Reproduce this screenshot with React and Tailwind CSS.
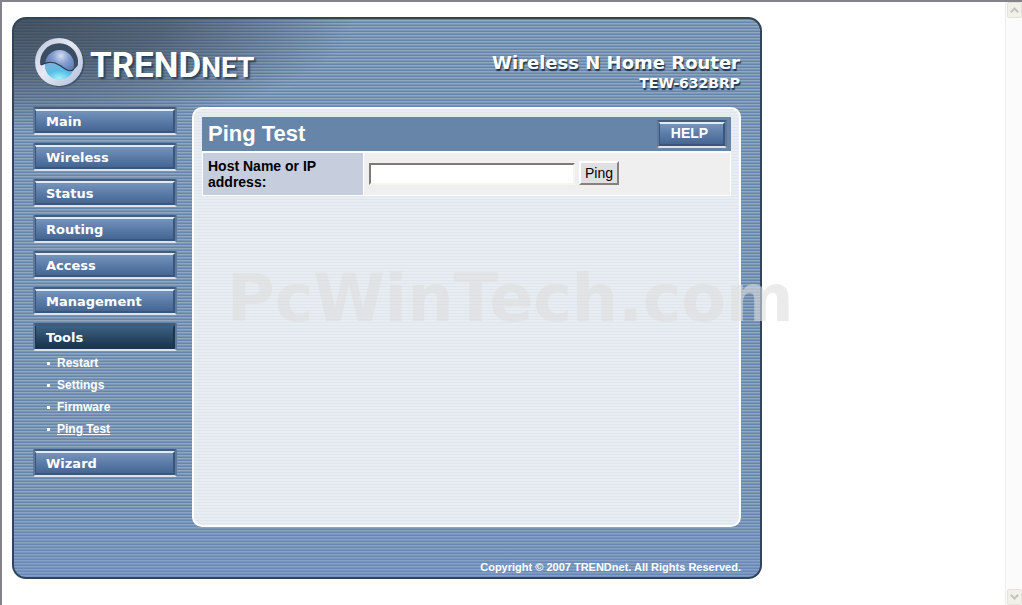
import React, { useState } from 'react'
import clsx from 'clsx'

const MENU = [
  { name: 'Main' },
  { name: 'Wireless' },
  { name: 'Status' },
  { name: 'Routing' },
  { name: 'Access' },
  { name: 'Management' },
  { name: 'Tools', children: ['Restart', 'Settings', 'Firmware', 'Ping Test'] },
  { name: 'Wizard' },
]

const bevel = 'block border-2 border-t-[#465b78] border-x-[#60789a] border-b-[#dde3ee] rounded-[2px]'

function Globe() {
  return (
    <svg viewBox="0 0 50 50" className="w-[50px] h-[50px] shrink-0" aria-hidden="true">
      <defs>
        <linearGradient id="ring" x1="0" y1="0" x2="1" y2="1">
          <stop offset="0" stopColor="#b9c4dc" />
          <stop offset="0.45" stopColor="#e6eaf4" />
          <stop offset="1" stopColor="#aebcd9" />
        </linearGradient>
        <radialGradient id="ball" cx="0.55" cy="0.2" r="0.8">
          <stop offset="0" stopColor="#d3def2" />
          <stop offset="0.35" stopColor="#859fd0" />
          <stop offset="1" stopColor="#48619b" />
        </radialGradient>
        <radialGradient id="sea" cx="0.5" cy="0.9" r="0.8">
          <stop offset="0" stopColor="#a4f0fb" />
          <stop offset="0.55" stopColor="#55bfe6" />
          <stop offset="1" stopColor="#78b3df" />
        </radialGradient>
      </defs>
      <circle cx="25.5" cy="25.5" r="24" fill="#25374c" opacity="0.45" />
      <circle cx="24" cy="24" r="24" fill="url(#ring)" />
      <path d="M5.3 27 A19 19 0 1 1 42.8 27.5 C41 29.5 39.5 31.5 38 32 L24 20 L10 26 Z" fill="#3a4d63" />
      <circle cx="24.5" cy="26.5" r="14.5" fill="url(#ball)" />
      <path d="M10 26.5 C15 23.5 20 24.5 25 28 C30 31.5 34 34 38.2 32 A14.5 14.5 0 0 1 10 26.5 Z" fill="url(#sea)" />
      <path d="M6 27 C13 23 19 23.5 25 27.5 C31 31.5 34 34.5 39 31.5" fill="none" stroke="#26384f" strokeWidth="1.1" />
    </svg>
  )
}

function MenuButton({ name, active }) {
  return (
    <a href="#" className={bevel}>
      <span
        className={clsx(
          'block h-6 border-2 border-l pl-2.5 bg-linear-to-b text-[13px] leading-[22px] font-bold text-white',
          active
            ? 'border-[#1c3650] border-t-[#3b5f80] from-[#3b6080] to-[#1b3450]'
            : 'border-[#39567f] border-t-[#dfeafa] from-[#7494bd] to-[#456593]'
        )}
      >
        {name}
      </span>
    </a>
  )
}

function Sidebar() {
  return (
    <nav className="w-36 shrink-0">
      <ul className="flex flex-col gap-2">
        {MENU.map((m) => (
          <li key={m.name}>
            <MenuButton name={m.name} active={!!m.children} />
            {m.children && (
              <ul className="py-px pl-3.5 font-['Liberation_Sans',Arial,sans-serif]">
                {m.children.map((c) => (
                  <li key={c} className="flex items-center gap-[7px] h-[22px] text-xs font-bold text-white">
                    <span className="w-[3px] h-[3px] bg-white" />
                    <a href="#" className={clsx(c === 'Ping Test' && 'underline')}>{c}</a>
                  </li>
                ))}
              </ul>
            )}
          </li>
        ))}
      </ul>
    </nav>
  )
}

function PingTest() {
  const [host, setHost] = useState('')

  return (
    <main className="flex-1 min-w-0 min-h-[420px] p-2 border-2 border-white rounded-[10px] bg-[repeating-linear-gradient(#dfe6ed_0px_1px,#e8edf1_1px_3px)] font-['Liberation_Sans',Arial,sans-serif]">
      <div className="flex items-center justify-between h-[34px] pl-1.5 pr-1 bg-[#6785a9]">
        <h1 className="text-[22px] leading-8 font-bold text-white">Ping Test</h1>
        <button type="button" className={clsx(bevel, 'w-[70px]')}>
          <span className="block h-6 border-2 border-l border-[#39567f] border-t-[#dfeafa] bg-linear-to-b from-[#7494bd] to-[#456593] pr-1 text-sm leading-[18px] font-bold text-white text-center">
            HELP
          </span>
        </button>
      </div>
      <form onSubmit={(e) => e.preventDefault()} className="flex gap-px bg-white pt-0.5 px-px pb-px">
        <label htmlFor="host" className="w-40 shrink-0 px-[5px] py-[5px] bg-[#c6cddc] text-sm leading-4 font-bold text-black">
          Host Name or IP address:
        </label>
        <div className="flex flex-1 items-center gap-1 px-[5px] bg-[#efefef]">
          <input
            id="host"
            type="text"
            value={host}
            onChange={(e) => setHost(e.target.value)}
            className="w-[206px] h-[22px] px-1 bg-white border-2 border-t-[#7d7b75] border-l-[#7d7b75] border-r-[#f6f5ef] border-b-[#f6f5ef] text-[13px] outline-none"
          />
          <button
            type="submit"
            className="h-6 mb-0.5 px-1 bg-[#e0dfe3] border-2 border-t-white border-l-white border-r-[#85837c] border-b-[#85837c] text-sm leading-4 text-black"
          >
            Ping
          </button>
        </div>
      </form>
    </main>
  )
}

function Scrollbar() {
  const btn = 'flex items-center justify-center w-[15px] h-4 rounded-[2px] border border-[#e3e3da] bg-[#f1f1ea]'
  return (
    <div className="flex flex-col items-center justify-between w-[17px] shrink-0 border-l border-[#ececec] bg-[#fbfbfc]">
      <button type="button" aria-label="Scroll up" className={btn}>
        <svg viewBox="0 0 9 6" className="w-[9px] h-1.5"><path d="M0.8 5.2 L4.5 1.5 L8.2 5.2" fill="none" stroke="#c4c4bd" strokeWidth="2" /></svg>
      </button>
      <button type="button" aria-label="Scroll down" className={btn}>
        <svg viewBox="0 0 9 6" className="w-[9px] h-1.5"><path d="M0.8 0.8 L4.5 4.5 L8.2 0.8" fill="none" stroke="#c4c4bd" strokeWidth="2" /></svg>
      </button>
    </div>
  )
}

export default function App() {
  return (
    <div className="flex min-h-screen border-t-2 border-l-2 border-[#85838a] bg-white font-['DejaVu_Sans',Verdana,sans-serif]">
      <div className="flex-1 min-w-0 pl-2.5 pt-[15px]">
        <div className="relative max-w-[750px] border-2 border-[#31445a] rounded-[14px] bg-[radial-gradient(ellipse_340px_110px_at_0_0,rgba(48,58,68,0.75),rgba(48,58,68,0.55)_45%,transparent),linear-gradient(transparent_85%,rgba(110,145,205,0.35)),repeating-linear-gradient(#6685ac_0px_1px,#8fa7bf_1px_2px,#7b96b5_2px_3px)]">
          <header className="flex justify-between h-[88px] pl-[21px] pr-5 text-white">
            <a href="#" className="flex items-start gap-[5px] pt-[19px]" aria-label="TRENDnet">
              <Globe />
              <span className="pt-2 font-[Roboto,sans-serif] text-[35px] leading-10 font-bold [text-shadow:2px_2px_2px_#2b3f58]">
                TREND<span className="text-[28px] uppercase">net</span>
              </span>
            </a>
            <div className="pt-8 text-right font-bold [text-shadow:1px_2px_1px_#22344a]">
              <p className="text-lg leading-6">Wireless N Home Router</p>
              <p className="text-sm leading-4">TEW-632BRP</p>
            </div>
          </header>

          <div className="flex gap-[15px] px-[19px]">
            <Sidebar />
            <PingTest />
          </div>

          <footer className="pt-8 pb-0.5 px-[19px] text-right text-[11px] leading-4 font-bold text-white font-['Liberation_Sans',Arial,sans-serif]">
            Copyright © 2007 TRENDnet. All Rights Reserved.
          </footer>

          {/* watermark */}
          <div className="absolute left-[213px] top-[243px] text-[65px] leading-[74px] font-bold text-[#dedede]/60 pointer-events-none">
            PcWinTech.com
          </div>
        </div>
      </div>
      <Scrollbar />
    </div>
  )
}
